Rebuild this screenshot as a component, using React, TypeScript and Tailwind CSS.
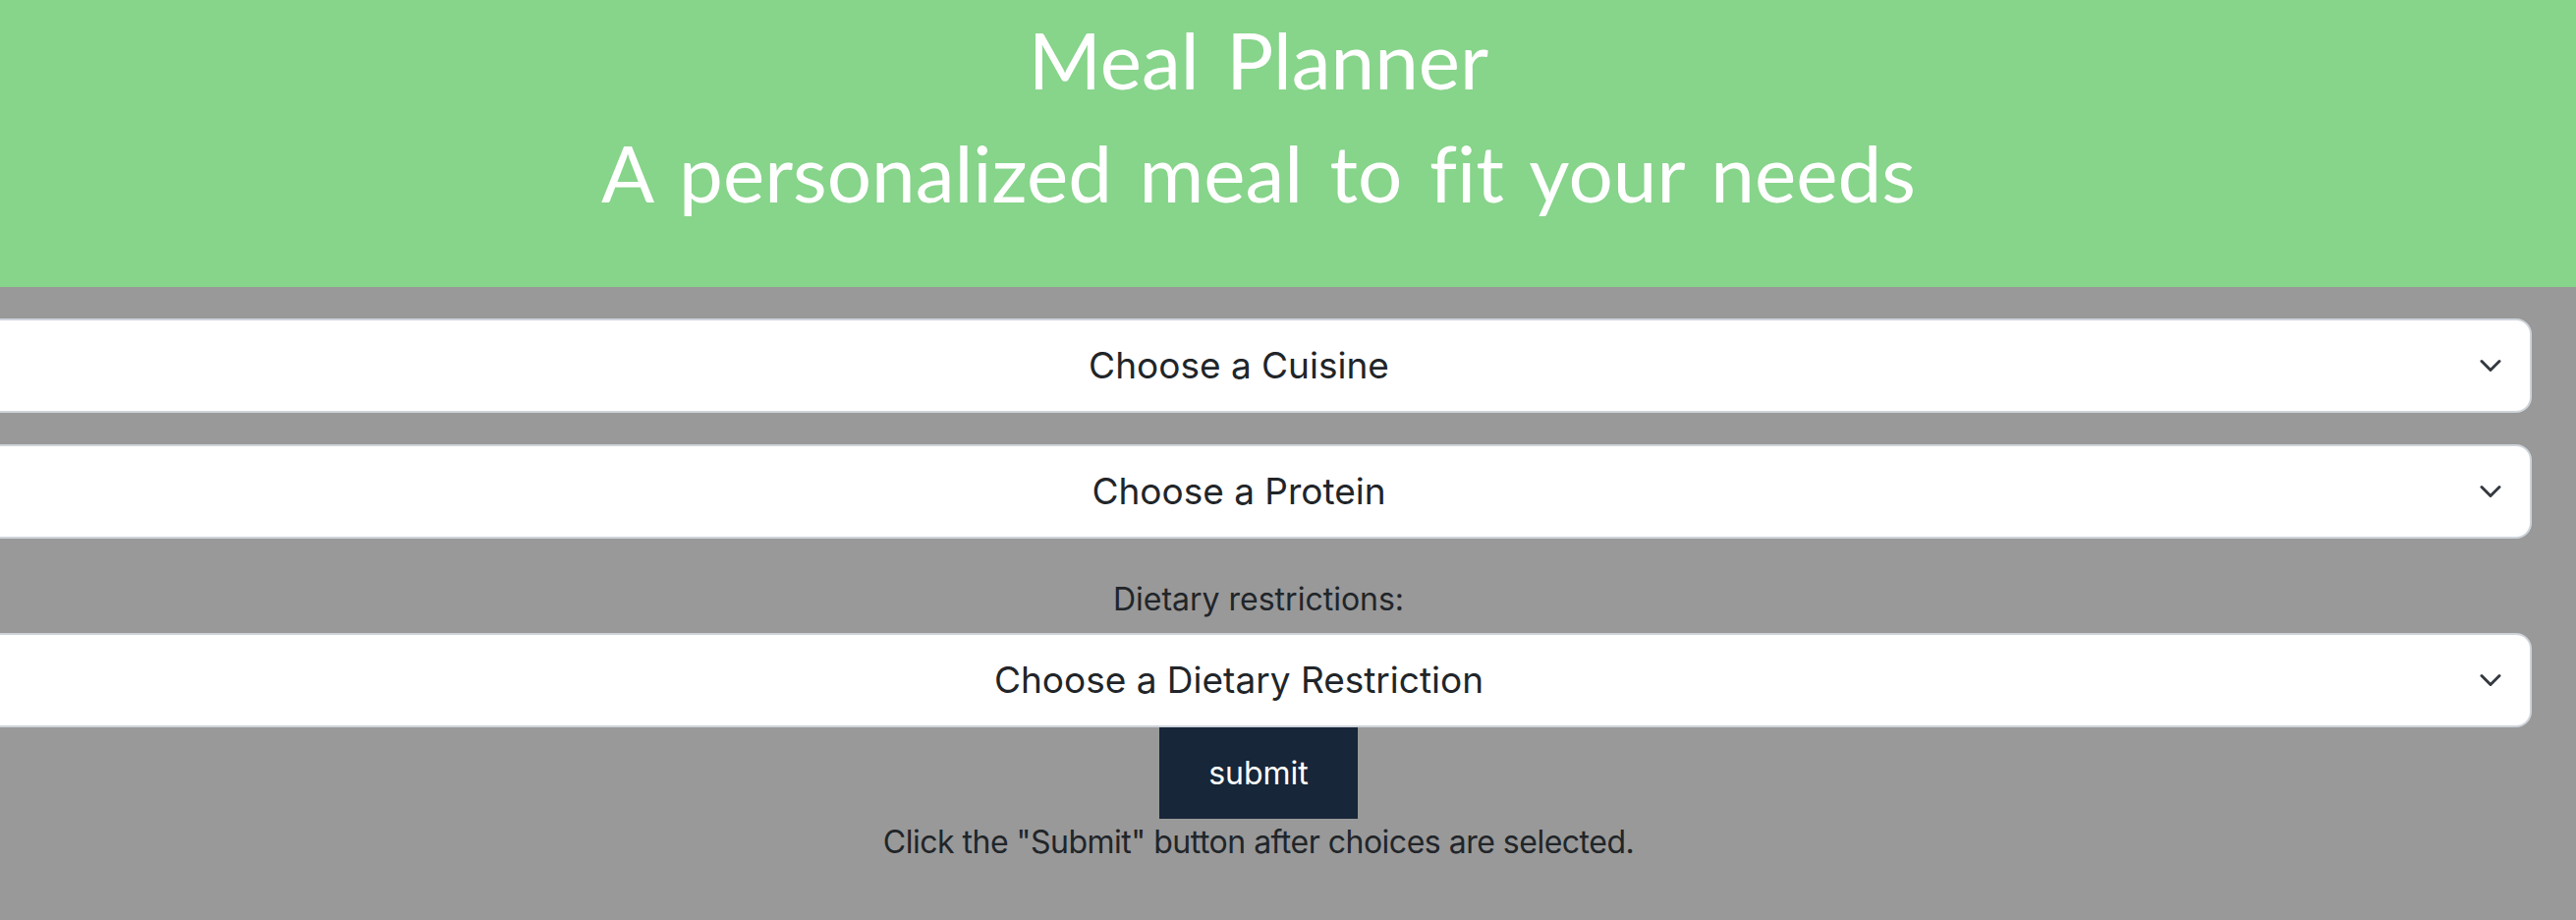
import React from 'react'

const SELECTS = ['Choose a Cuisine', 'Choose a Protein']

function Chevron() {
  return (
    <svg viewBox="0 0 16 16" className="w-[24px] h-[24px] shrink-0 ml-[20px]" fill="none" stroke="#343a40" strokeWidth="2" strokeLinecap="round" strokeLinejoin="round">
      <path d="m2 5 6 6 6-6" />
    </svg>
  )
}

function FakeSelect({ label }: { label: string }) {
  return (
    <div className="flex items-center h-[96px] bg-white border-2 border-[#ced4da] rounded-[16px] pl-[32px] pr-[28px] text-[37px] text-[#212529] cursor-pointer">
      <span className="flex-1 text-center leading-[60px]">{label}</span>
      <Chevron />
    </div>
  )
}

export default function App() {
  return (
    <div className="min-h-[936px] bg-[#999999] overflow-hidden" style={{ fontFamily: 'Inter, "Liberation Sans", sans-serif' }}>
      {/* header */}
      <div className="h-[292px] bg-[#87d48b] text-white pt-[10px]">
        <div className="-ml-[15px] w-[2592px] text-center text-[80px] leading-[100px] [word-spacing:7px] [font-variant-ligatures:none]" style={{ fontFamily: '"Trebuchet MS", Lato, "Open Sans", sans-serif' }}>
          <div>Meal Planner</div>
          <div className="mt-[15px]">A personalized meal to fit your needs</div>
        </div>
      </div>

      {/* form */}
      <div className="-ml-[15px] w-[2592px] mt-[32px] text-center">
        <div className="flex flex-col gap-[32px]">
          {SELECTS.map((s) => <FakeSelect key={s} label={s} />)}
        </div>
        <div className="mt-[38px] mb-[10px] text-[32px] leading-[48px] text-[#212529]">Dietary restrictions:</div>
        <FakeSelect label="Choose a Dietary Restriction" />
        <button className="w-[202px] h-[93px] bg-[#172638] text-white text-[32px] leading-[48px]">submit</button>
        <div className="text-[32px] leading-[48px] tracking-[-0.5px] text-[#212529]">Click the "Submit" button after choices are selected.</div>
      </div>
    </div>
  )
}
